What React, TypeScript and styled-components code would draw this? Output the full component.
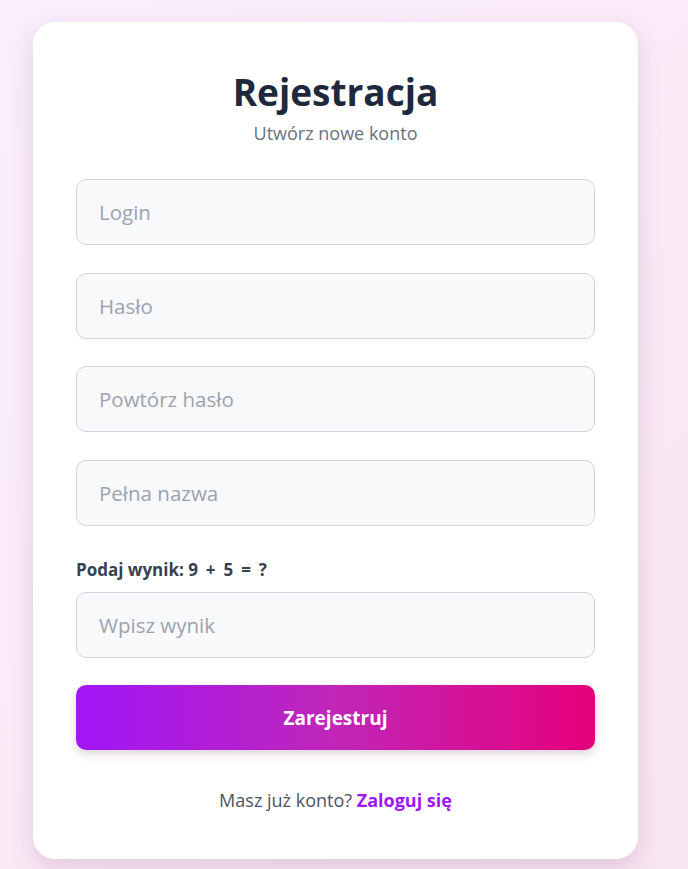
import React from "react";
import styled, { createGlobalStyle } from "styled-components";

const GlobalStyle = createGlobalStyle`
  * { box-sizing: border-box; }
  html, body {
    margin: 0;
    padding: 0;
  }
  body {
    min-height: 869px;
    font-family: "Open Sans", "Noto Sans", sans-serif;
    background: linear-gradient(135deg, #f9eefb 0%, #fbeaf6 50%, #f8e6f1 100%);
  }
`;

const Page = styled.div`
  padding: 22px 0 11px 33px;
`;

const Card = styled.div`
  width: 605px;
  background: #ffffff;
  border-radius: 22px;
  padding: 44px 43px 47px;
  box-shadow: 0 10px 25px rgba(120, 60, 110, 0.18);
`;

const Header = styled.div`
  text-align: center;
  margin-bottom: 34px;
`;

const Title = styled.h1`
  margin: 0;
  font-size: 37px;
  line-height: 52px;
  font-weight: 700;
  color: #1e293b;
`;

const Subtitle = styled.p`
  margin: 3px 0 0;
  font-size: 18px;
  line-height: 24px;
  color: #6b7280;
`;

const Form = styled.form`
  display: flex;
  flex-direction: column;
`;

const Field = styled.div<{ $gap?: number }>`
  margin-bottom: ${({ $gap }) => $gap ?? 27.7}px;
`;

const Input = styled.input`
  display: block;
  width: 100%;
  height: 66px;
  padding: 0 22px;
  border: 1px solid #d1d5db;
  border-radius: 10px;
  background: #f8f9fb;
  font-family: inherit;
  font-size: 20.5px;
  color: #1f2937;
  outline: none;

  &::placeholder {
    color: #9ca3af;
  }
`;

const Label = styled.label`
  display: block;
  font-size: 17px;
  font-weight: 700;
  color: #374151;
  line-height: 24px;
  margin-bottom: 10px;
`;

const Equation = styled.span`
  word-spacing: 3.5px;
`;

const Button = styled.button`
  width: 100%;
  height: 65px;
  border: none;
  border-radius: 10px;
  background: linear-gradient(90deg, #a016f7 0%, #c026b8 50%, #e6007a 100%);
  color: #ffffff;
  font-family: inherit;
  font-size: 19px;
  font-weight: 700;
  cursor: pointer;
  box-shadow: 0 4px 10px rgba(80, 30, 80, 0.2);
`;

const Footer = styled.p`
  margin: 38px 0 0;
  text-align: center;
  font-size: 18px;
  color: #4b5563;
`;

const Link = styled.a`
  color: #a016f7;
  font-weight: 700;
  text-decoration: none;
`;

export default function App() {
  return (
    <>
      <GlobalStyle />
      <Page>
        <Card>
          <Header>
            <Title>Rejestracja</Title>
            <Subtitle>Utwórz nowe konto</Subtitle>
          </Header>
          <Form onSubmit={(e) => e.preventDefault()}>
            <Field>
              <Input placeholder="Login" />
            </Field>
            <Field>
              <Input type="password" placeholder="Hasło" />
            </Field>
            <Field>
              <Input type="password" placeholder="Powtórz hasło" />
            </Field>
            <Field $gap={32}>
              <Input placeholder="Pełna nazwa" />
            </Field>
            <Label>
              Podaj wynik: <Equation>9 + 5 = ?</Equation>
            </Label>
            <Field $gap={27}>
              <Input placeholder="Wpisz wynik" />
            </Field>
            <Button type="submit">Zarejestruj</Button>
          </Form>
          <Footer>
            Masz już konto? <Link href="#">Zaloguj się</Link>
          </Footer>
        </Card>
      </Page>
    </>
  );
}
